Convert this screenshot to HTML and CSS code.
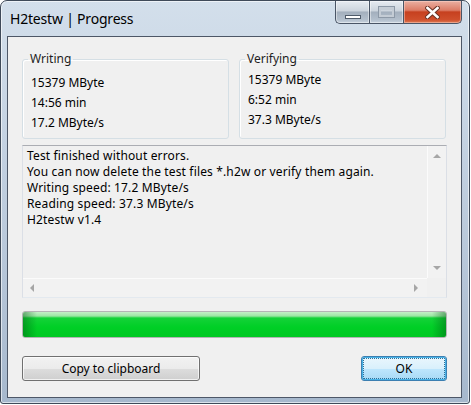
FILE: index.html
```html
<!DOCTYPE html>
<html>
<head>
<meta charset="utf-8">
<title>H2testw | Progress</title>
<link rel="stylesheet" href="styles.css">
</head>
<body>
<div class="window">
  <div class="titlebar">
    <span class="title">H2testw | Progress</span>
    <div class="caption-buttons">
      <div class="cap cap-min"><span class="min-glyph"></span></div>
      <div class="cap cap-max"><span class="max-glyph"></span></div>
      <div class="cap cap-close">
        <svg class="close-glyph" width="15" height="13" viewBox="0 0 15 13">
          <path d="M2.5 2 L12.5 11 M12.5 2 L2.5 11" stroke="#6b3325" stroke-width="4.6" stroke-linecap="square" fill="none"/>
          <path d="M2.5 2 L12.5 11 M12.5 2 L2.5 11" stroke="#ffffff" stroke-width="2.6" stroke-linecap="square" fill="none"/>
        </svg>
      </div>
    </div>
  </div>
  <div class="client">
    <div class="groups">
      <fieldset class="group">
        <legend>Writing</legend>
        <div class="row">15379 MByte</div>
        <div class="row">14:56 min</div>
        <div class="row">17.2 MByte/s</div>
      </fieldset>
      <fieldset class="group group-verify">
        <legend>Verifying</legend>
        <div class="row">15379 MByte</div>
        <div class="row">6:52 min</div>
        <div class="row">37.3 MByte/s</div>
      </fieldset>
    </div>
    <div class="log">
      <div class="log-text">
        <div>Test finished without errors.</div>
        <div>You can now delete the test files *.h2w or verify them again.</div>
        <div>Writing speed: 17.2 MByte/s</div>
        <div>Reading speed: 37.3 MByte/s</div>
        <div>H2testw v1.4</div>
      </div>
      <div class="vscroll"><span class="arrow arrow-up"></span><span class="arrow arrow-down"></span></div>
      <div class="hscroll"><span class="arrow arrow-left"></span><span class="arrow arrow-right"></span></div>
      <div class="corner"></div>
    </div>
    <div class="progress"><div class="progress-fill" style="width:100%"></div></div>
    <div class="buttons">
      <button class="btn btn-copy">Copy to clipboard</button>
      <button class="btn btn-ok">OK</button>
    </div>
  </div>
</div>
</body>
</html>
```
FILE: styles.css
```css
html, body {
  margin: 0;
  padding: 0;
  background: #ffffff;
}
body {
  font-family: "Noto Sans", "Open Sans", sans-serif;
  font-size: 12px;
  color: #000;
}
.window {
  width: 470px;
  height: 404px;
  box-sizing: border-box;
  border: 1px solid #3f4a59;
  border-radius: 7px 7px 3px 3px;
  background: linear-gradient(180deg, #d3dfeb 0%, #c4d2e2 35%, #b3c3d6 75%, #a6b8cd 100%);
  box-shadow: inset 0 0 0 1px rgba(255, 255, 255, 0.6);
  padding: 0 7px 5px 6px;
  display: flex;
  flex-direction: column;
}
.titlebar {
  height: 35px;
  flex-shrink: 0;
  display: flex;
  align-items: flex-start;
}
.title {
  font-size: 14px;
  letter-spacing: -0.2px;
  line-height: 20px;
  margin: 8px 0 0 3px;
  color: #000;
}
.caption-buttons {
  margin-left: auto;
  display: flex;
  height: 23px;
}
.cap {
  box-sizing: border-box;
  height: 23px;
  display: flex;
  align-items: center;
  justify-content: center;
  border: 1px solid #4a5566;
  border-top: none;
}
.cap-min {
  width: 34px;
  border-right: none;
  border-radius: 0 0 0 5px;
  background: linear-gradient(180deg, #e6ebf1 0%, #ccd4dd 45%, #a3afbd 50%, #b3bfcc 85%, #c7d2de 100%);
  box-shadow: inset 0 0 0 1px rgba(255, 255, 255, 0.45);
}
.cap-max {
  width: 34px;
  border-right: none;
  background: linear-gradient(180deg, #e6ebf1 0%, #ccd4dd 45%, #a3afbd 50%, #b3bfcc 85%, #c7d2de 100%);
  box-shadow: inset 0 0 0 1px rgba(255, 255, 255, 0.45);
}
.cap-close {
  width: 59px;
  border-radius: 0 0 5px 0;
  background: linear-gradient(180deg, #eab0a2 0%, #dc7c66 42%, #c6401f 50%, #cf4f2c 85%, #dd7b55 100%);
  box-shadow: inset 0 0 0 1px rgba(255, 220, 210, 0.45);
}
.min-glyph {
  width: 14px;
  height: 2px;
  margin-top: 10px;
  background: #ffffff;
  border: 1px solid #4f5b6a;
}
.max-glyph {
  width: 11px;
  height: 5px;
  border: 2px solid #c4ccd5;
  border-top-width: 3px;
  outline: 1px solid #8d99a7;
}
.close-glyph {
  display: block;
}
.client {
  flex: 1;
  border: 1px solid #4d5767;
  background: #f0f0f0;
  padding: 0 14px 16px 14px;
  display: flex;
  flex-direction: column;
  min-height: 0;
}
.groups {
  margin-top: 14px;
  display: grid;
  grid-template-columns: 207px 207px;
  column-gap: 10px;
}
.group {
  margin: 0;
  min-width: 0;
  border: 1px solid #d5dfe5;
  border-radius: 3px;
  padding: 6px 8px 5px 8px;
  box-shadow: inset 1px 1px 0 #ffffff;
}
.group legend {
  padding: 0 2px;
  margin-left: -3px;
  line-height: 16px;
  color: #1e1e1e;
}
.group-verify {
  padding-top: 3px;
  padding-bottom: 8px;
}
.row {
  line-height: 20px;
  white-space: nowrap;
}
.log {
  margin-top: 6px;
  height: 153px;
  box-sizing: border-box;
  border: 1px solid;
  border-color: #abadb3 #dbdfe6 #e3e9ef #dbdfe6;
  display: grid;
  grid-template-columns: 1fr 19px;
  grid-template-rows: 1fr 19px;
  flex-shrink: 0;
}
.log-text {
  padding: 2px 4px;
  line-height: 16px;
  letter-spacing: 0.15px;
  white-space: nowrap;
  overflow: hidden;
}
.vscroll {
  background: #f2f2f2;
  border-left: 1px solid #fbfbfb;
  display: flex;
  flex-direction: column;
  justify-content: space-between;
  align-items: center;
  padding: 8px 0;
}
.hscroll {
  background: #f2f2f2;
  border-top: 1px solid #fbfbfb;
  display: flex;
  justify-content: space-between;
  align-items: center;
  padding: 0 9px 0 7px;
}
.corner {
  background: #f0f0f0;
}
.arrow {
  width: 0;
  height: 0;
  display: block;
}
.arrow-up {
  border-left: 4px solid transparent;
  border-right: 4px solid transparent;
  border-bottom: 4px solid #a6a6a6;
}
.arrow-down {
  border-left: 4px solid transparent;
  border-right: 4px solid transparent;
  border-top: 4px solid #a6a6a6;
}
.arrow-left {
  border-top: 4px solid transparent;
  border-bottom: 4px solid transparent;
  border-right: 4px solid #a6a6a6;
}
.arrow-right {
  border-top: 4px solid transparent;
  border-bottom: 4px solid transparent;
  border-left: 4px solid #a6a6a6;
}
.progress {
  margin-top: 13px;
  height: 27px;
  box-sizing: border-box;
  border: 1px solid #b4b4b4;
  border-radius: 3px;
  background: #e6e6e6;
  overflow: hidden;
  flex-shrink: 0;
}
.progress-fill {
  height: 100%;
  background:
    linear-gradient(90deg, rgba(0, 90, 20, 0.45) 0px, rgba(0, 90, 20, 0) 14px, rgba(0, 90, 20, 0) calc(100% - 14px), rgba(0, 90, 20, 0.45) 100%),
    linear-gradient(180deg, #c4efc7 0%, #9ce6a3 16%, #14d238 24%, #00cf26 60%, #00c923 100%);
}
.buttons {
  margin-top: 18px;
  display: flex;
  justify-content: space-between;
  flex-shrink: 0;
}
.btn {
  font: inherit;
  font-size: 12px;
  color: #000;
  height: 25px;
  box-sizing: border-box;
  border: 1px solid #707070;
  border-radius: 3px;
  padding: 0;
  background: linear-gradient(180deg, #f2f2f2 0%, #ebebeb 50%, #dddddd 51%, #cfcfcf 100%);
  box-shadow: inset 0 0 0 1px rgba(255, 255, 255, 0.7);
}
.btn-copy {
  width: 178px;
}
.btn-ok {
  width: 86px;
  border-color: #3c7fb1;
  background: linear-gradient(180deg, #eaf6fd 0%, #d9f0fc 50%, #bee6fd 51%, #a7d9f5 100%);
  box-shadow: inset 0 0 0 1px #48b2e6;
  outline: 1px dotted #2f6f98;
  outline-offset: -3px;
}
```
